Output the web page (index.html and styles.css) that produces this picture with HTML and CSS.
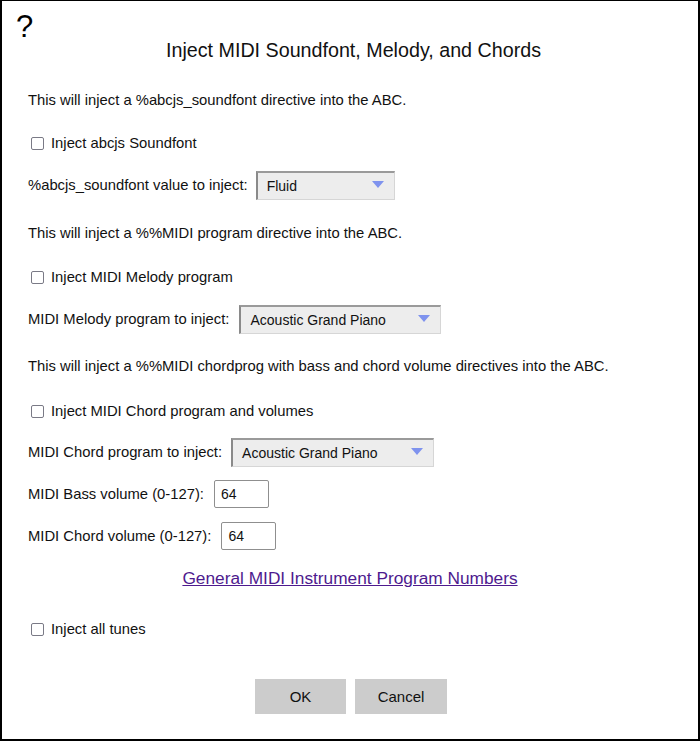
FILE: index.html
```html
<!DOCTYPE html>
<html>
<head>
<meta charset="utf-8">
<link rel="stylesheet" href="styles.css">
</head>
<body>
<div class="dialog">
  <div class="help">?</div>
  <div class="title">Inject MIDI Soundfont, Melody, and Chords</div>

  <div class="row p1">This will inject a %abcjs_soundfont directive into the ABC.</div>
  <label class="row cb cb1"><span class="box"></span><span>Inject abcjs Soundfont</span></label>
  <div class="row">
    <span>%abcjs_soundfont value to inject:</span>
    <div class="select w1"><span>Fluid</span><svg class="arrow" width="12" height="7" viewBox="0 0 12 7"><path d="M0 0 L12 0 L6 7 Z" fill="#7f93ee"/></svg></div>
  </div>

  <div class="row p2">This will inject a %%MIDI program directive into the ABC.</div>
  <label class="row cb cb2"><span class="box"></span><span>Inject MIDI Melody program</span></label>
  <div class="row">
    <span>MIDI Melody program to inject:</span>
    <div class="select w2"><span>Acoustic Grand Piano</span><svg class="arrow" width="12" height="7" viewBox="0 0 12 7"><path d="M0 0 L12 0 L6 7 Z" fill="#7f93ee"/></svg></div>
  </div>

  <div class="row p3">This will inject a %%MIDI chordprog with bass and chord volume directives into the ABC.</div>
  <label class="row cb cb3"><span class="box"></span><span>Inject MIDI Chord program and volumes</span></label>
  <div class="row sel3row">
    <span>MIDI Chord program to inject:</span>
    <div class="select w3"><span>Acoustic Grand Piano</span><svg class="arrow" width="12" height="7" viewBox="0 0 12 7"><path d="M0 0 L12 0 L6 7 Z" fill="#7f93ee"/></svg></div>
  </div>
  <div class="row">
    <span>MIDI Bass volume (0-127):</span>
    <input class="num" type="text" value="64">
  </div>
  <div class="row">
    <span>MIDI Chord volume (0-127):</span>
    <input class="num" type="text" value="64">
  </div>
  <div class="row linkrow"><a class="link" href="#">General MIDI Instrument Program Numbers</a></div>
  <label class="row cb cb4"><span class="box"></span><span>Inject all tunes</span></label>

  <div class="buttons">
    <button class="btn ok">OK</button>
    <button class="btn cancel">Cancel</button>
  </div>
</div>
</body>
</html>
```

FILE: styles.css
```css
html, body {
  margin: 0;
  padding: 0;
  background: #fff;
}
body {
  font-family: "Liberation Sans", Arial, sans-serif;
  font-size: 14.8px;
  color: #111;
}
.dialog {
  position: relative;
  box-sizing: border-box;
  width: 700px;
  height: 741px;
  border: 2px solid #000;
  border-top-width: 1px;
  padding: 34px 26px 0 26px;
  display: flex;
  flex-direction: column;
  gap: 12px;
}
.help {
  position: absolute;
  left: 14px;
  top: 6px;
  font-size: 31px;
  line-height: 40px;
  color: #000;
}
.title {
  font-size: 19.7px;
  line-height: 30px;
  text-align: center;
  padding-left: 7px;
  color: #111;
}
.row {
  height: 30px;
  display: flex;
  align-items: center;
  gap: 9px;
  white-space: nowrap;
}
.p1 { margin-top: 8px; }
.p2 { margin-top: 6px; }
.p3 { margin-top: 5px; }
.cb1 { margin-top: 1px; }
.cb2 { margin-top: 2px; }
.cb3 { margin-top: 3px; }
.sel3row { margin-top: -1px; }
.cb4 { margin-top: 9px; }
.cb {
  gap: 7px;
  padding-left: 3px;
}
.box {
  box-sizing: border-box;
  width: 13px;
  height: 13px;
  border: 1px solid #7a7a86;
  border-radius: 2px;
  background: #fff;
}
.select {
  box-sizing: border-box;
  height: 29px;
  display: flex;
  align-items: center;
  justify-content: space-between;
  padding: 0 10px 0 9px;
  background: #ededed;
  border-top: 2px solid #9a9a9a;
  border-left: 2px solid #8a8a8a;
  border-right: 1px solid #d6d6d6;
  border-bottom: 1px solid #d6d6d6;
  font-size: 14px;
  color: #111;
}
.select .arrow {
  margin-top: -3px;
}
.w1 { width: 139px; margin-left: -1px; }
.w2 { width: 202px; margin-left: 1px; }
.w3 { width: 203px; }
.num {
  box-sizing: border-box;
  width: 55px;
  height: 28px;
  border: 1px solid #8f8f8f;
  border-radius: 2px;
  padding: 0 6px;
  font-family: "Liberation Sans", Arial, sans-serif;
  font-size: 14px;
  color: #111;
  margin-left: 1px;
}
.linkrow {
  justify-content: center;
}
.link {
  font-size: 17.3px;
  color: #4e1a8e;
  text-decoration: underline;
}
.buttons {
  margin-top: 23px;
  display: flex;
  justify-content: center;
  gap: 9px;
  padding-left: 2px;
}
.btn {
  height: 35px;
  border: none;
  background: #cccccc;
  font-family: "Liberation Sans", Arial, sans-serif;
  font-size: 15px;
  color: #111;
  padding: 0;
}
.ok { width: 91px; }
.cancel { width: 92px; }
```
